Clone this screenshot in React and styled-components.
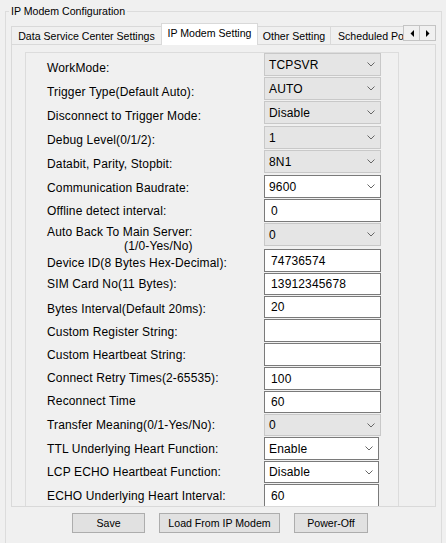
import React from "react";
import styled, { createGlobalStyle } from "styled-components";

const GlobalStyle = createGlobalStyle`
    html, body {
        margin: 0;
        width: 446px;
        height: 543px;
        overflow: hidden;
        background: #f0f0f0;
        font-family: "Liberation Sans", Arial, sans-serif;
        color: #000;
    }
    * { box-sizing: border-box; }
`;

// Group box runs on past the window bottom, so no bottom edge is drawn
const Group = styled.fieldset`
    margin: 4px 4px 0 5px;
    padding: 5px 5px 0 5px;
    border: 1px solid #dcdcdc;
    border-bottom: none;
    min-width: 0;
    height: 539px;
`;

const Legend = styled.legend`
    margin-left: -2px;
    padding: 0 2px;
    font-size: 10.6px;
    line-height: 14px;
`;

const TabStrip = styled.div`
    display: flex;
    height: 21px;
`;

const TabList = styled.div`
    flex: 1;
    min-width: 0;
    display: flex;
    align-items: flex-end;
    overflow-x: clip;
    overflow-y: visible;
`;

const Tab = styled.div`
    flex: none;
    position: relative;
    z-index: ${p => (p.$active ? 2 : 1)};
    width: ${p => p.$w}px;
    height: ${p => (p.$active ? 22 : 18)}px;
    margin-left: ${p => (p.$first ? 0 : -1)}px;
    margin-bottom: ${p => (p.$active ? -1 : 0)}px;
    padding-left: ${p => (p.$left ? 7 : 0)}px;
    padding-bottom: ${p => (p.$active ? 3 : 0)}px;
    display: flex;
    align-items: center;
    justify-content: ${p => (p.$left ? "flex-start" : "center")};
    background: ${p => (p.$active ? "#fff" : "#f0f0f0")};
    border: 1px solid #d9d9d9;
    border-bottom: none;
    font-size: 10.6px;
    white-space: nowrap;
`;

const Scroller = styled.div`
    flex: none;
    display: flex;
    margin-top: 2px;
    height: 16px;
`;

const ScrollButton = styled.div`
    width: 17px;
    height: 16px;
    margin-left: ${p => (p.$second ? -1 : 0)}px;
    display: flex;
    align-items: center;
    justify-content: center;
    background: #f0f0f0;
    border: 1px solid #c4c4c4;
`;

const TabPage = styled.div`
    height: 463px;
    border: 1px solid #d9d9d9;
    overflow: hidden;
    padding: 7px 0 0 13px;
`;

const Panel = styled.div`
    width: 374px;
    border: 1px solid #dcdcdc;
    padding: 0 0 0 21px;
    display: flex;
    flex-direction: column;
`;

const Row = styled.div`
    flex: none;
    display: flex;
    height: ${p => p.$h}px;
`;

const Label = styled.div`
    flex: none;
    width: 217px;
    padding-top: ${p => p.$top}px;
    font-size: 12px;
    line-height: 14px;
    letter-spacing: 0.15px;
    white-space: nowrap;
`;

const SubLabel = styled.div`
    padding-left: 77px;
`;

const Field = styled.div`
    flex: none;
    width: ${p => p.$w}px;
    height: ${p => p.$h}px;
    display: flex;
    align-items: center;
    justify-content: space-between;
    padding: 0 5px 0 ${p => (p.$kind === "text" ? 6 : 4)}px;
    background: ${p => (p.$kind === "select" ? "#e5e5e5" : "#fff")};
    border: 1px solid ${p => (p.$kind === "select" ? "#c8c8c8" : "#7a7a7a")};
    font-size: 12px;
    letter-spacing: 0.15px;
    white-space: nowrap;
`;

const ButtonBar = styled.div`
    display: flex;
    gap: 14px;
    padding: 6px 0 0 61px;
`;

const Button = styled.button`
    width: ${p => p.$w}px;
    height: 20px;
    padding: 0;
    background: #e1e1e1;
    border: 1px solid #adadad;
    font-family: "Liberation Sans", Arial, sans-serif;
    font-size: 10.6px;
    color: #000;
`;

const Chevron = () => (
    <svg width="8" height="5" viewBox="0 0 8 5">
        <path d="M0.5 0.5 L4 4 L7.5 0.5" fill="none" stroke="#666" strokeWidth="1" />
    </svg>
);

const Arrow = ({ dir }) => (
    <svg width="4" height="7" viewBox="0 0 4 7">
        {dir === "left"
            ? <path d="M4 0 L0.5 3.5 L4 7 Z" fill="#000" />
            : <path d="M0 0 L3.5 3.5 L0 7 Z" fill="#000" />}
    </svg>
);

const TABS = [
    { name: "Data Service Center Settings", w: 151 },
    { name: "IP Modem Setting", w: 97, active: true },
    { name: "Other Setting", w: 74 },
    { name: "Scheduled Power-Off", w: 120, left: true },
];

// h: row pitch, lt: label offset from the control's top
const ROWS = [
    { label: "WorkMode:", kind: "select", value: "TCPSVR", h: 24, lt: 8 },
    { label: "Trigger Type(Default Auto):", kind: "select", value: "AUTO", h: 24, lt: 8 },
    { label: "Disconnect to Trigger Mode:", kind: "select", value: "Disable", h: 25, lt: 8 },
    { label: "Debug Level(0/1/2):", kind: "select", value: "1", h: 24, lt: 7 },
    { label: "Databit, Parity, Stopbit:", kind: "select", value: "8N1", h: 25, lt: 7 },
    { label: "Communication Baudrate:", kind: "combo", value: "9600", h: 24, lt: 6 },
    { label: "Offline detect interval:", kind: "text", value: "0", h: 24, lt: 5 },
    { label: "Auto Back To Main Server:", sub: "(1/0-Yes/No)", kind: "select", value: "0", h: 26, lt: 2 },
    { label: "Device ID(8 Bytes Hex-Decimal):", kind: "text", value: "74736574", h: 24, lt: 7 },
    { label: "SIM Card No(11 Bytes):", kind: "text", value: "13912345678", h: 23, lt: 4 },
    { label: "Bytes Interval(Default 20ms):", kind: "text", value: "20", h: 23, lt: 6 },
    { label: "Custom Register String:", kind: "text", value: "", h: 24, lt: 6 },
    { label: "Custom Heartbeat String:", kind: "text", value: "", h: 24, lt: 5 },
    { label: "Connect Retry Times(2-65535):", kind: "text", value: "100", h: 24, lt: 4 },
    { label: "Reconnect Time", kind: "text", value: "60", h: 23, lt: 3 },
    { label: "Transfer Meaning(0/1-Yes/No):", kind: "select", value: "0", h: 23, lt: 4 },
    { label: "TTL Underlying Heart Function:", kind: "combo", value: "Enable", h: 24, lt: 5, narrow: true },
    { label: "LCP ECHO Heartbeat Function:", kind: "combo", value: "Disable", h: 23, lt: 4, narrow: true },
    { label: "ECHO Underlying Heart Interval:", kind: "text", value: "60", h: 24, lt: 5, narrow: true },
];

function SettingRow({ row }) {
    return (
        <Row $h={row.h}>
            <Label $top={row.lt}>
                {row.label}
                {row.sub && <SubLabel>{row.sub}</SubLabel>}
            </Label>
            <Field
                $kind={row.kind}
                $w={row.narrow ? 115 : 117}
                $h={Math.min(row.h - 1, 23)}
            >
                <span>{row.value}</span>
                {row.kind !== "text" && <Chevron />}
            </Field>
        </Row>
    );
}

export default function App() {
    return (
        <>
            <GlobalStyle />
            <Group>
                <Legend>IP Modem Configuration</Legend>

                <TabStrip>
                    <TabList>
                        {TABS.map((t, i) => (
                            <Tab key={t.name} $w={t.w} $active={t.active} $first={i === 0} $left={t.left}>
                                {t.name}
                            </Tab>
                        ))}
                    </TabList>
                    <Scroller>
                        <ScrollButton><Arrow dir="left" /></ScrollButton>
                        <ScrollButton $second><Arrow dir="right" /></ScrollButton>
                    </Scroller>
                </TabStrip>

                <TabPage>
                    <Panel>
                        {ROWS.map(row => (
                            <SettingRow key={row.label} row={row} />
                        ))}
                    </Panel>
                </TabPage>

                <ButtonBar>
                    <Button $w={73}>Save</Button>
                    <Button $w={121}>Load From IP Modem</Button>
                    <Button $w={74}>Power-Off</Button>
                </ButtonBar>
            </Group>
        </>
    );
}
